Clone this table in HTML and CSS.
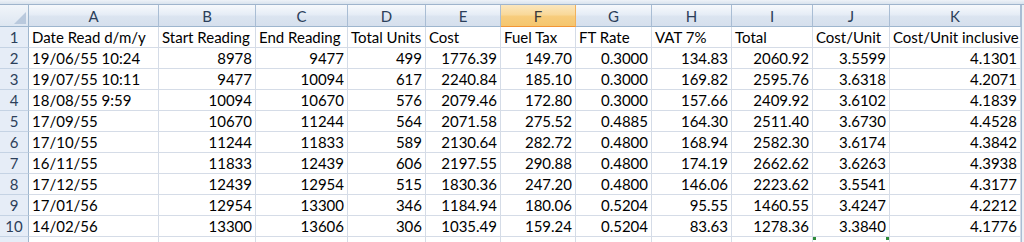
FILE: index.html
```html
<!DOCTYPE html>
<html>
<head>
<meta charset="utf-8">
<link rel="stylesheet" href="styles.css">
</head>
<body>
<div class="topbar"></div>
<div class="sheet">
  <div class="c corner"><svg class="tri" width="12" height="12" viewBox="0 0 12 12"><polygon points="12,0 12,12 0,12" fill="#b9c9dd"/></svg></div>
  <div class="c ch">A</div><div class="c ch">B</div><div class="c ch">C</div><div class="c ch">D</div><div class="c ch">E</div><div class="c ch sel">F</div><div class="c ch">G</div><div class="c ch">H</div><div class="c ch">I</div><div class="c ch">J</div><div class="c ch">K</div><div class="edge"></div>

  <div class="c rh">1</div><div class="c">Date Read d/m/y</div><div class="c">Start Reading</div><div class="c">End Reading</div><div class="c">Total Units</div><div class="c">Cost</div><div class="c">Fuel Tax</div><div class="c">FT Rate</div><div class="c">VAT 7%</div><div class="c">Total</div><div class="c">Cost/Unit</div><div class="c">Cost/Unit inclusive</div><div class="edge"></div>

  <div class="c rh">2</div><div class="c">19/06/55 10:24</div><div class="c n">8978</div><div class="c n">9477</div><div class="c n">499</div><div class="c n">1776.39</div><div class="c n">149.70</div><div class="c n">0.3000</div><div class="c n">134.83</div><div class="c n">2060.92</div><div class="c n">3.5599</div><div class="c n">4.1301</div><div class="edge"></div>

  <div class="c rh">3</div><div class="c">19/07/55 10:11</div><div class="c n">9477</div><div class="c n">10094</div><div class="c n">617</div><div class="c n">2240.84</div><div class="c n">185.10</div><div class="c n">0.3000</div><div class="c n">169.82</div><div class="c n">2595.76</div><div class="c n">3.6318</div><div class="c n">4.2071</div><div class="edge"></div>

  <div class="c rh">4</div><div class="c">18/08/55 9:59</div><div class="c n">10094</div><div class="c n">10670</div><div class="c n">576</div><div class="c n">2079.46</div><div class="c n">172.80</div><div class="c n">0.3000</div><div class="c n">157.66</div><div class="c n">2409.92</div><div class="c n">3.6102</div><div class="c n">4.1839</div><div class="edge"></div>

  <div class="c rh">5</div><div class="c">17/09/55</div><div class="c n">10670</div><div class="c n">11244</div><div class="c n">564</div><div class="c n">2071.58</div><div class="c n">275.52</div><div class="c n">0.4885</div><div class="c n">164.30</div><div class="c n">2511.40</div><div class="c n">3.6730</div><div class="c n">4.4528</div><div class="edge"></div>

  <div class="c rh">6</div><div class="c">17/10/55</div><div class="c n">11244</div><div class="c n">11833</div><div class="c n">589</div><div class="c n">2130.64</div><div class="c n">282.72</div><div class="c n">0.4800</div><div class="c n">168.94</div><div class="c n">2582.30</div><div class="c n">3.6174</div><div class="c n">4.3842</div><div class="edge"></div>

  <div class="c rh">7</div><div class="c">16/11/55</div><div class="c n">11833</div><div class="c n">12439</div><div class="c n">606</div><div class="c n">2197.55</div><div class="c n">290.88</div><div class="c n">0.4800</div><div class="c n">174.19</div><div class="c n">2662.62</div><div class="c n">3.6263</div><div class="c n">4.3938</div><div class="edge"></div>

  <div class="c rh">8</div><div class="c">17/12/55</div><div class="c n">12439</div><div class="c n">12954</div><div class="c n">515</div><div class="c n">1830.36</div><div class="c n">247.20</div><div class="c n">0.4800</div><div class="c n">146.06</div><div class="c n">2223.62</div><div class="c n">3.5541</div><div class="c n">4.3177</div><div class="edge"></div>

  <div class="c rh">9</div><div class="c">17/01/56</div><div class="c n">12954</div><div class="c n">13300</div><div class="c n">346</div><div class="c n">1184.94</div><div class="c n">180.06</div><div class="c n">0.5204</div><div class="c n">95.55</div><div class="c n">1460.55</div><div class="c n">3.4247</div><div class="c n">4.2212</div><div class="edge"></div>

  <div class="c rh">10</div><div class="c">14/02/56</div><div class="c n">13300</div><div class="c n">13606</div><div class="c n">306</div><div class="c n">1035.49</div><div class="c n">159.24</div><div class="c n">0.5204</div><div class="c n">83.63</div><div class="c n">1278.36</div><div class="c n">3.3840</div><div class="c n">4.1776</div><div class="edge"></div>

  <div class="c rh"></div><div class="c"></div><div class="c"></div><div class="c"></div><div class="c"></div><div class="c"></div><div class="c"></div><div class="c"></div><div class="c"></div><div class="c"></div><div class="c copy"></div><div class="c"></div><div class="edge"></div>
</div>
</body>
</html>
```
FILE: styles.css
```css
html, body {
  margin: 0;
  padding: 0;
  background: #ffffff;
  overflow: hidden;
}
body {
  font-family: Lato, "Open Sans", sans-serif;
  font-size: 15px;
  color: #000;
}
.topbar {
  height: 5px;
  box-sizing: border-box;
  background: linear-gradient(#eef2f8, #d9e3ee);
  border-bottom: 1px solid #9fb4cc;
}
.sheet {
  display: grid;
  grid-template-columns: 29px 130px 97px 92px 78px 75px 75px 76px 80px 81px 77px 131px 3px;
  grid-template-rows: 22px;
  grid-auto-rows: 21px;
}
.c {
  box-sizing: border-box;
  border-right: 1px solid #d5dce7;
  border-bottom: 1px solid #d5dce7;
  padding: 0 3px;
  display: flex;
  align-items: center;
  white-space: nowrap;
  overflow: hidden;
}
.n {
  justify-content: flex-end;
}
.ch {
  justify-content: center;
  background: linear-gradient(#f7f9fc, #e6edf6 45%, #dbe4f0 55%, #d6e0ed);
  border-right: 1px solid #a9bdd4;
  border-bottom: 1px solid #9eb6ce;
  color: #2c3f5a;
}
.ch.sel {
  background: linear-gradient(#fbe6bd, #f9d99a 45%, #f7cc7c 55%, #f5c66e);
  border-right-color: #f1b15c;
  border-bottom-color: #f29536;
  color: #3a3a3a;
}
.corner {
  position: relative;
  background: linear-gradient(#f1f5fa, #dde6f1);
  border-right: 1px solid #9eb6ce;
  border-bottom: 1px solid #9eb6ce;
  padding: 0;
}
.tri {
  position: absolute;
  right: 2px;
  bottom: 2px;
}
.rh {
  justify-content: center;
  background: #e6edf7;
  border-right: 1px solid #9eb6ce;
  border-bottom: 1px solid #c5d3e4;
  color: #2c3f5a;
  padding: 0;
}
.edge {
  background: #eef1f5;
  border-left: 1px solid #a9bdd4;
  box-sizing: border-box;
}
.copy {
  position: relative;
}
.copy::before, .copy::after {
  content: "";
  position: absolute;
  top: 0;
  width: 3px;
  height: 3px;
  background: #2e8b3a;
}
.copy::before { left: 0; }
.copy::after { right: 0; }
```
